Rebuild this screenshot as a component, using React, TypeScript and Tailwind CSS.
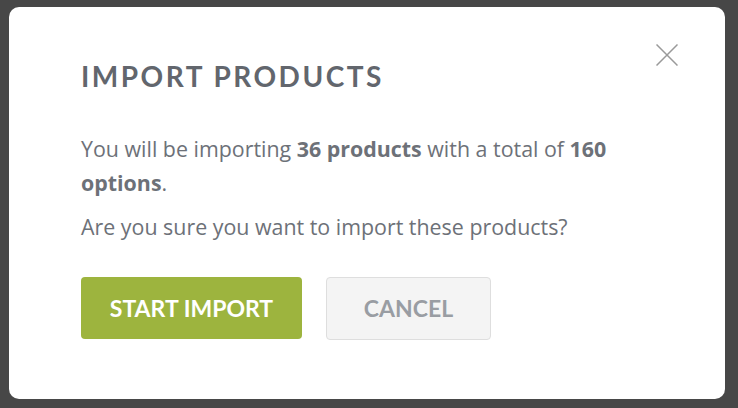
export default function App() {
  return (
    <div className="w-[738px] h-[408px] bg-[#474747] pt-[7px] pl-[9px]">
      <div className="relative w-[716px] h-[392px] bg-white rounded-[10px] pl-[72px] pt-[52px]">
        <button className="absolute left-[647px] top-[37px] w-[22px] h-[22px]">
          <svg width="22" height="22" viewBox="0 0 22 22">
            <path d="M0.5 0.5 L21.5 21.5 M21.5 0.5 L0.5 21.5" stroke="#9a9a9a" strokeWidth="1.5" />
          </svg>
        </button>
        <h1 className="text-[28px] leading-[34px] font-bold tracking-[2.5px] text-[#62666d]" style={{ fontFamily: "Lato, sans-serif" }}>
          IMPORT PRODUCTS
        </h1>
        <div className="mt-[39px] text-[21.4px] leading-[34px] text-[#6d7178] w-[560px]" style={{ fontFamily: "'Open Sans', sans-serif" }}>
          <p>
            You will be importing <b className="font-bold">36 products</b> with a total of <b className="font-bold">160 options</b>.
          </p>
          <p className="mt-[10px]">Are you sure you want to import these products?</p>
        </div>
        <div className="flex gap-[24px] mt-[33px]">
          <button className="w-[221px] h-[62px] rounded-[4px] bg-[#9db43e] text-white text-[23px] font-bold" style={{ fontFamily: "Lato, sans-serif" }}>
            START IMPORT
          </button>
          <button className="w-[165px] h-[63px] rounded-[4px] bg-[#f4f4f4] border border-[#dedede] text-[#999da3] text-[23px] font-bold" style={{ fontFamily: "Lato, sans-serif" }}>
            CANCEL
          </button>
        </div>
      </div>
    </div>
  );
}
